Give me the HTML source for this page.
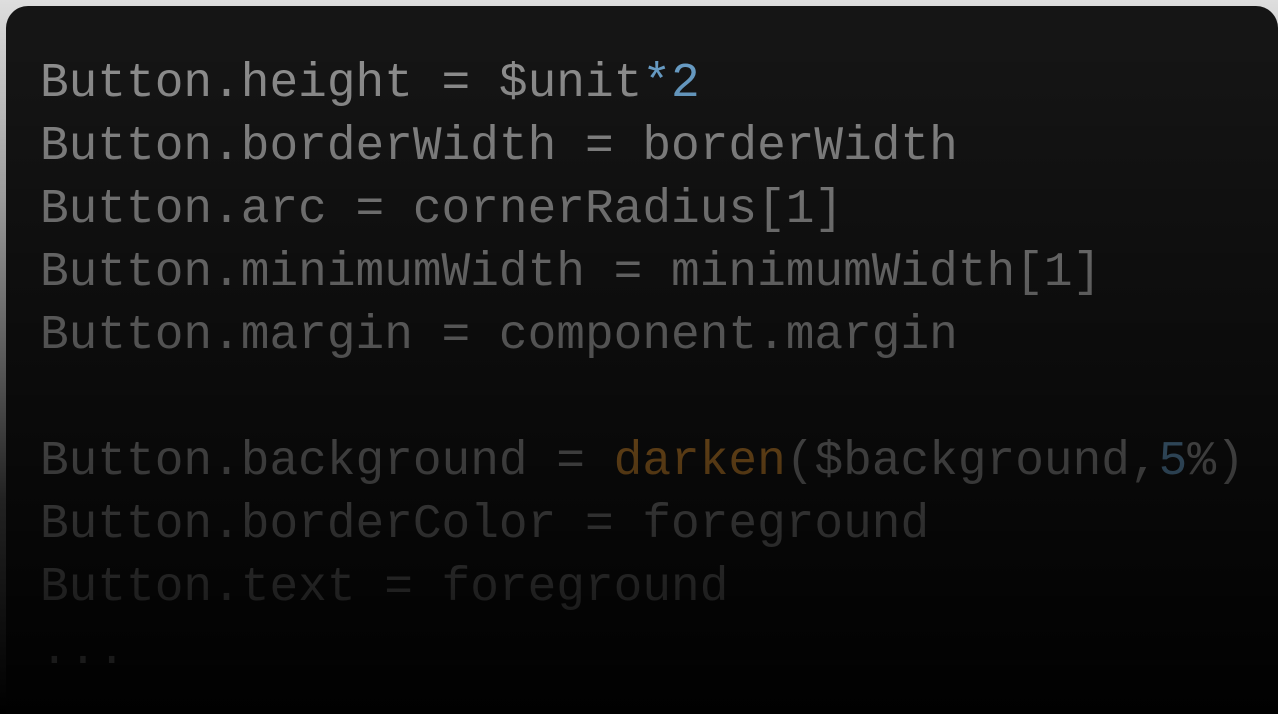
<!DOCTYPE html>
<html><head><style>
html,body{margin:0;padding:0;width:1278px;height:714px;overflow:hidden;background:linear-gradient(to bottom,#dedede 0,#9a9a9a 200px,#222 500px,#000 714px);}
.card{position:absolute;left:6px;top:6px;width:1272px;height:708px;border-radius:22px 22px 0 0;background:#151515;overflow:hidden;}
pre{position:absolute;left:34px;top:47px;margin:0;font-family:"Liberation Mono",monospace;font-size:47.8px;line-height:63px;color:#909090;}
.b{color:#6a9fc8}.o{color:#d08a30}
.fade{position:absolute;left:0;top:0;right:0;bottom:0;background:linear-gradient(to bottom,rgba(0,0,0,0) 40px,rgba(0,0,0,.33) 260px,rgba(0,0,0,.58) 450px,rgba(0,0,0,.8) 600px,rgba(0,0,0,.95) 708px);}
.dots{position:absolute;left:34px;top:614px;margin:0;font-family:"Liberation Mono",monospace;font-size:47.8px;line-height:63px;color:#1a1a1a;z-index:2;}
</style></head><body>
<div class="card">
<pre>Button.height = $unit<span class="b">*2</span>
Button.borderWidth = borderWidth
Button.arc = cornerRadius[1]
Button.minimumWidth = minimumWidth[1]
Button.margin = component.margin

Button.background = <span class="o">darken</span>($background,<span class="b">5</span>%)
Button.borderColor = foreground
Button.text = foreground</pre>
<div class="fade"></div>
<div class="dots">...</div>
</div>
</body></html>
